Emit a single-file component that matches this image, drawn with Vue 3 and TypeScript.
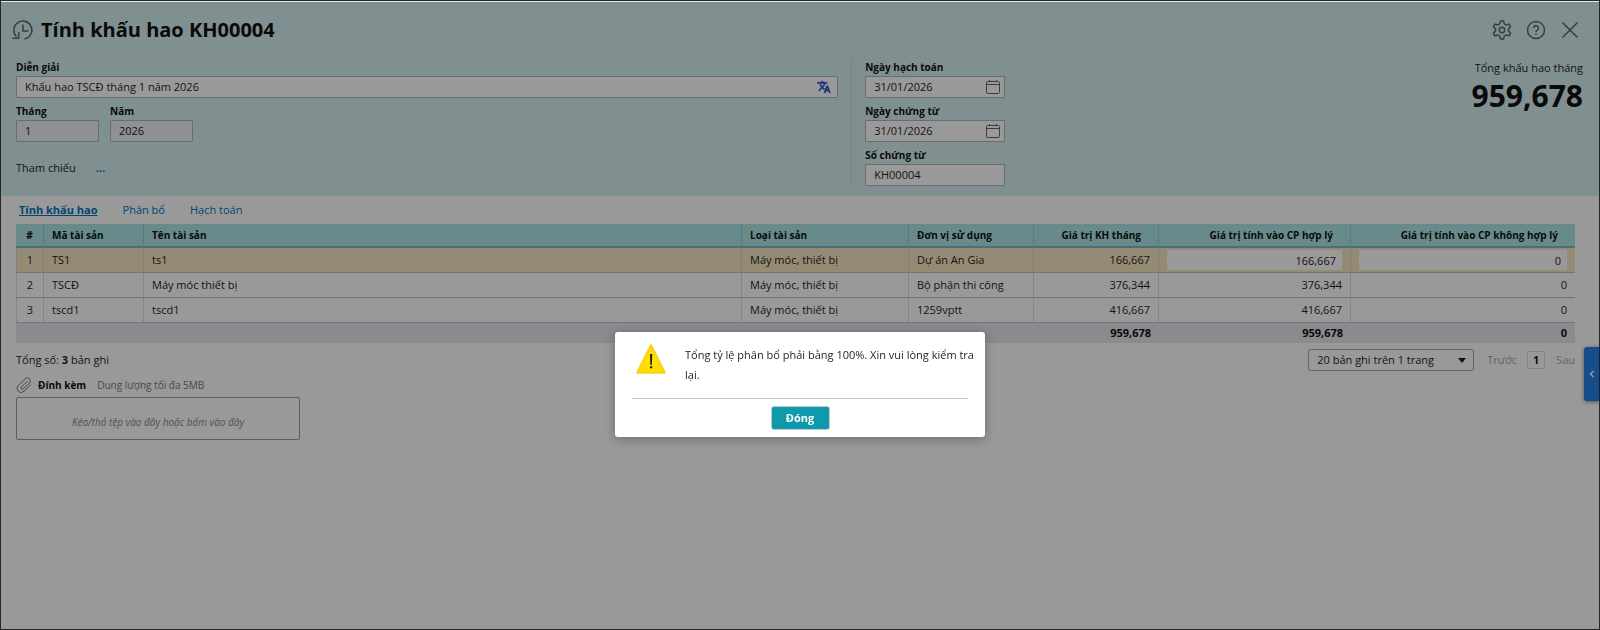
<script setup lang="ts">
import { ref } from 'vue'

interface Asset {
  code: string
  name: string
  type: string
  unit: string
  monthly: string
  deductible: string
  nonDeductible: string
}

const description = ref('Khấu hao TSCĐ tháng 1 năm 2026')
const month = ref('1')
const year = ref('2026')
const postingDate = ref('31/01/2026')
const voucherDate = ref('31/01/2026')
const voucherNo = ref('KH00004')
const pageSize = ref('20 bản ghi trên 1 trang')
const dialogOpen = ref(true)
const activeTab = ref('Tính khấu hao')
const tabs = ['Tính khấu hao', 'Phân bổ', 'Hạch toán']

const assets = ref<Asset[]>([
  { code: 'TS1', name: 'ts1', type: 'Máy móc, thiết bị', unit: 'Dự án An Gia', monthly: '166,667', deductible: '166,667', nonDeductible: '0' },
  { code: 'TSCĐ', name: 'Máy móc thiết bị', type: 'Máy móc, thiết bị', unit: 'Bộ phận thi công', monthly: '376,344', deductible: '376,344', nonDeductible: '0' },
  { code: 'tscd1', name: 'tscd1', type: 'Máy móc, thiết bị', unit: '1259vptt', monthly: '416,667', deductible: '416,667', nonDeductible: '0' },
])
const editing = ref(0)
</script>

<template>
  <div class="page">
    <section class="voucher">
      <header class="titlebar">
        <button class="icon-btn" type="button" aria-label="Lịch sử">
          <svg width="22" height="22" viewBox="0 0 22 22" fill="none" stroke="currentColor" stroke-width="1.5">
            <path d="M4.500 17.500A9 9 0 1 1 12.500 20" />
            <path d="M.5 19.200h6.200v-6.200" />
            <path d="M11 5.500V12h5.500" />
          </svg>
        </button>
        <h1>Tính khấu hao KH00004</h1>
        <div class="actions">
          <button class="icon-btn" type="button" aria-label="Thiết lập">
            <svg width="20" height="20" viewBox="0 0 20 20" fill="none" stroke="currentColor" stroke-width="1.500" stroke-linejoin="round">
              <path d="M8.500 1h3l.8 2.900q1 .4 1.900 1.100l2.900-.8 1.500 2.600-2.100 2.100v2.200l2.100 2.100-1.500 2.600-2.900-.8q-.9.700-1.900 1.100L11.500 19h-3l-.8-2.900q-1-.4-1.900-1.100l-2.900.8-1.500-2.600 2.100-2.100V8.900L1.400 6.800l1.500-2.600 2.900.8q.9-.7 1.900-1.100z" />
              <circle cx="10" cy="10" r="2.700" />
            </svg>
          </button>
          <button class="icon-btn" type="button" aria-label="Trợ giúp">
            <svg width="20" height="20" viewBox="0 0 20 20" fill="none" stroke="currentColor" stroke-width="1.500">
              <circle cx="10" cy="10" r="8.500" />
              <path d="M7.600 8a2.400 2.400 0 1 1 3.800 2c-.9.600-1.400 1-1.400 2" />
              <path d="M10 13.300v1.500" />
            </svg>
          </button>
          <button class="icon-btn" type="button" aria-label="Đóng trang">
            <svg width="20" height="20" viewBox="0 0 20 20" fill="none" stroke="currentColor" stroke-width="1.500">
              <path d="M2.500 2.500l15 15M17.500 2.500l-15 15" />
            </svg>
          </button>
        </div>
      </header>

      <div class="form">
        <div class="general">
          <div class="field">
            <label for="description">Diễn giải</label>
            <div class="box">
              <input id="description" v-model="description" type="text">
              <button class="box-btn translate" type="button" aria-label="Dịch">
                <svg width="14" height="14" viewBox="0 0 24 24" fill="currentColor" stroke="currentColor">
                  <path d="M12.870 15.070l-2.540-2.510.03-.03A17.520 17.520 0 0 0 14.070 6H17V4h-7V2H8v2H1v2h11.170C11.500 7.920 10.440 9.750 9 11.350 8.070 10.320 7.300 9.190 6.690 8h-2c.73 1.630 1.730 3.170 2.980 4.560l-5.090 5.020L4 19l5-5 3.110 3.110.76-2.040zM18.500 10h-2L12 22h2l1.120-3h4.750L21 22h2l-4.500-12zm-2.620 7l1.620-4.330L19.120 17h-3.240z" />
                </svg>
              </button>
            </div>
          </div>
          <div class="period">
            <div class="field">
              <label for="month">Tháng</label>
              <div class="box readonly"><input id="month" v-model="month" type="text" readonly></div>
            </div>
            <div class="field">
              <label for="year">Năm</label>
              <div class="box readonly"><input id="year" v-model="year" type="text" readonly></div>
            </div>
          </div>
          <div class="reference">
            <span>Tham chiếu</span>
            <a href="#">...</a>
          </div>
        </div>

        <div class="dates">
          <div class="field">
            <label for="posting">Ngày hạch toán</label>
            <div class="box">
              <input id="posting" v-model="postingDate" type="text">
              <button class="box-btn" type="button" aria-label="Chọn ngày hạch toán">
                <svg width="14" height="14" viewBox="0 0 14 14" fill="none" stroke="currentColor">
                  <rect x=".5" y="1.500" width="13" height="12" rx="1" /><path d="M.5 4.500h13M3.500 0v2M10.500 0v2" />
                </svg>
              </button>
            </div>
          </div>
          <div class="field">
            <label for="voucher-date">Ngày chứng từ</label>
            <div class="box">
              <input id="voucher-date" v-model="voucherDate" type="text">
              <button class="box-btn" type="button" aria-label="Chọn ngày chứng từ">
                <svg width="14" height="14" viewBox="0 0 14 14" fill="none" stroke="currentColor">
                  <rect x=".5" y="1.500" width="13" height="12" rx="1" /><path d="M.5 4.500h13M3.500 0v2M10.500 0v2" />
                </svg>
              </button>
            </div>
          </div>
          <div class="field">
            <label for="voucher-no">Số chứng từ</label>
            <div class="box"><input id="voucher-no" v-model="voucherNo" type="text"></div>
          </div>
        </div>

        <div class="total">
          <span>Tổng khấu hao tháng</span>
          <strong>959,678</strong>
        </div>
      </div>
    </section>

    <main class="detail">
      <nav class="tabs">
        <button
          v-for="tab in tabs"
          :key="tab"
          type="button"
          :class="{ active: tab === activeTab }"
          @click="activeTab = tab"
        >{{ tab }}</button>
      </nav>

      <table>
        <colgroup>
          <col class="c-index"><col class="c-code"><col><col class="c-type">
          <col class="c-unit"><col class="c-monthly"><col class="c-ok"><col class="c-not">
        </colgroup>
        <thead>
          <tr>
            <th class="center">#</th>
            <th>Mã tài sản</th>
            <th>Tên tài sản</th>
            <th>Loại tài sản</th>
            <th>Đơn vị sử dụng</th>
            <th class="num">Giá trị KH tháng</th>
            <th class="num">Giá trị tính vào CP hợp lý</th>
            <th class="num">Giá trị tính vào CP không hợp lý</th>
          </tr>
        </thead>
        <tbody>
          <tr v-for="(asset, i) in assets" :key="asset.code" :class="{ selected: i === editing }" @click="editing = i">
            <td class="center">{{ i + 1 }}</td>
            <td>{{ asset.code }}</td>
            <td>{{ asset.name }}</td>
            <td>{{ asset.type }}</td>
            <td>{{ asset.unit }}</td>
            <td class="num">{{ asset.monthly }}</td>
            <td class="num">
              <input v-if="i === editing" v-model="asset.deductible" type="text" aria-label="Giá trị tính vào CP hợp lý">
              <template v-else>{{ asset.deductible }}</template>
            </td>
            <td class="num">
              <input v-if="i === editing" v-model="asset.nonDeductible" type="text" aria-label="Giá trị tính vào CP không hợp lý">
              <template v-else>{{ asset.nonDeductible }}</template>
            </td>
          </tr>
        </tbody>
        <tfoot>
          <tr>
            <td colspan="5"></td>
            <td class="num">959,678</td>
            <td class="num">959,678</td>
            <td class="num">0</td>
          </tr>
        </tfoot>
      </table>

      <div class="pager">
        <p>Tổng số: <b>3</b> bản ghi</p>
        <div class="pages">
          <div class="select">
            <select v-model="pageSize" aria-label="Số bản ghi trên trang">
              <option>20 bản ghi trên 1 trang</option>
              <option>50 bản ghi trên 1 trang</option>
            </select>
            <svg width="8" height="5" viewBox="0 0 8 5"><path d="M0 0h8L4 5z" fill="currentColor" /></svg>
          </div>
          <button type="button" disabled>Trước</button>
          <button type="button" class="current">1</button>
          <button type="button" disabled>Sau</button>
        </div>
      </div>

      <div class="attach">
        <svg width="16" height="16" viewBox="0 0 16 16" fill="none" stroke="currentColor" stroke-linecap="round">
          <path d="M11 4.500L5.500 10a1.300 1.300 0 0 0 1.900 1.900l6-6a2.900 2.900 0 0 0-4.200-4.200L2.300 8.600a4 4 0 0 0 5.700 5.700L14.500 8" />
        </svg>
        <b>Đính kèm</b>
        <span>Dung lượng tối đa 5MB</span>
      </div>
      <button class="dropzone" type="button">Kéo/thả tệp vào đây hoặc bấm vào đây</button>
    </main>

    <button class="drawer" type="button" aria-label="Mở bảng bên">
      <svg width="6" height="8" viewBox="0 0 6 8" fill="none" stroke="currentColor" stroke-width="1.500"><path d="M4.500 1l-3 3 3 3" /></svg>
    </button>

    <div v-if="dialogOpen" class="overlay">
      <div class="dialog" role="alertdialog" aria-modal="true" aria-describedby="dialog-text">
        <div class="message">
          <svg width="30" height="30" viewBox="0 0 30 30">
            <path d="M15 1.500L28.500 28.500h-27z" fill="#ffe100" stroke="#fdd216" stroke-width="2.500" stroke-linejoin="round" />
            <path d="M13.900 10h2.400l-.5 11h-1.400zM14 22.300h2.200v2H14z" fill="#222" />
          </svg>
          <p id="dialog-text">Tổng tỷ lệ phân bổ phải bằng 100%. Xin vui lòng kiểm tra lại.</p>
        </div>
        <div class="buttons">
          <button type="button" @click="dialogOpen = false">Đóng</button>
        </div>
      </div>
    </div>
  </div>
</template>

<style>
body {
  background: #fff;
}
</style>

<style scoped>
* {
  box-sizing: border-box;
}

.page {
  display: flex;
  flex-direction: column;
  min-height: 100vh;
  border: 1px solid #27262b;
  background: #fff;
  color: #1f1f1f;
  font: 11px/16px "Open Sans", "Noto Sans", sans-serif;
}

button,
input,
select {
  padding: 0;
  border: 0;
  background: none;
  color: inherit;
  font: inherit;
}

p,
h1 {
  margin: 0;
}

.voucher {
  padding: 12px 16px 10px 15px;
  background: #d5eeef;
}

.titlebar {
  display: flex;
  align-items: center;
  gap: 7px;
  height: 34px;
  margin: 0 3px 11px -4px;
}

h1 {
  color: #111;
  font-size: 20px;
  line-height: 28px;
}

.icon-btn {
  display: flex;
  color: #666;
}

.actions {
  display: flex;
  gap: 14px;
  margin-left: auto;
}

.form {
  display: flex;
  align-items: flex-start;
}

.general {
  display: flex;
  flex: 0 0 53.3%;
  flex-direction: column;
  gap: 4px;
  padding-right: 13px;
}

.dates {
  display: flex;
  flex-direction: column;
  gap: 4px;
  width: 154px;
  padding-left: 13px;
  border-left: 1px solid #c4dadc;
}

.field {
  display: flex;
  flex-direction: column;
}

.field label {
  color: #111;
  font-size: 10px;
  font-weight: 700;
  line-height: 18px;
}

.box {
  display: flex;
  align-items: center;
  height: 22px;
  padding: 0 4px 0 8px;
  border: 1px solid #afb5bd;
  border-radius: 1px;
  background: #fff;
}

.box input {
  flex: 1;
  min-width: 0;
}

.readonly {
  background: #eff0f2;
}

.box-btn {
  display: flex;
  color: #666;
}

.translate {
  margin-right: 2px;
  color: #2350c8;
}

.period {
  display: flex;
  gap: 11px;
}

.period .field {
  width: 83px;
}

.reference {
  display: flex;
  gap: 20px;
  padding-top: 14px;
}

.reference a {
  color: #0075c0;
  font-weight: 700;
  text-decoration: none;
}

.total {
  display: flex;
  flex-direction: column;
  align-items: flex-end;
  gap: 1px;
  margin-left: auto;
  padding-top: 2px;
}

.total strong {
  color: #111;
  font-size: 30px;
  line-height: 38px;
}

.detail {
  padding: 2px 24px 16px 15px;
}

.tabs {
  display: flex;
  gap: 25px;
  padding: 0 0 2px 3px;
}

.tabs button {
  color: #0075c0;
  line-height: 24px;
}

.tabs .active {
  font-weight: 700;
  text-decoration: underline;
}

table {
  width: 100%;
  border-collapse: separate;
  border-spacing: 0;
  table-layout: fixed;
}

.c-index { width: 28px; }
.c-code { width: 100px; }
.c-type { width: 167px; }
.c-unit { width: 125px; }
.c-monthly { width: 125px; }
.c-ok { width: 192px; }
.c-not { width: 224px; }

th,
td {
  height: 25px;
  padding: 0 8px;
  text-align: left;
}

th {
  height: 24px;
  border-right: 1px solid #9ccbd6;
  border-bottom: 2px solid #76bfc4;
  background: #ade6e8;
  color: #111;
  font-size: 10px;
}

tbody td {
  border-right: 1px dotted #a2c8d6;
  border-bottom: 1px solid #c0c2c8;
}

tbody td:first-child {
  border-left: 1px dotted #a2c8d6;
}

th:last-child,
tbody td:last-child {
  border-right: 0;
}

.selected td {
  background: #f9e8c3;
}

.center,
tbody .center {
  padding: 0;
  text-align: center;
}

.num {
  text-align: right;
}

th.num {
  padding-right: 17px;
}

td input {
  display: block;
  width: 100%;
  height: 20px;
  padding: 0 6px;
  background: #fff;
  text-align: right;
}

tfoot td {
  height: 20px;
  background: #e6e8ef;
  color: #111;
  font-weight: 700;
}

.pager {
  display: flex;
  align-items: center;
  justify-content: space-between;
  padding-top: 6px;
}

.pages {
  display: flex;
  align-items: center;
}

.select {
  display: flex;
  align-items: center;
  width: 166px;
  height: 22px;
  margin-right: 13px;
  padding-right: 7px;
  border: 1px solid #a8aaaf;
  border-radius: 2px;
}

.select select {
  flex: 1;
  min-width: 0;
  padding-left: 8px;
  appearance: none;
}

.pages button:disabled {
  color: #a9a9a9;
}

.pages .current {
  width: 18px;
  height: 18px;
  margin: 0 11px 0 10px;
  border: 1px solid #dcdcdc;
  color: #111;
  font-weight: 700;
}

.attach {
  display: flex;
  align-items: center;
  gap: 6px;
  height: 16px;
  margin: 6px 0 4px;
  font-size: 10px;
}

.attach svg {
  color: #777;
}

.attach b {
  color: #111;
}

.attach span {
  margin-left: 5px;
  color: #777;
}

.dropzone {
  width: 284px;
  height: 43px;
  padding-top: 7px;
  border: 1px solid #89a09f;
  border-radius: 2px;
  color: #888;
  font-size: 10px;
  font-style: italic;
}

.drawer {
  position: fixed;
  top: 347px;
  right: 1px;
  display: flex;
  align-items: center;
  justify-content: center;
  width: 15px;
  height: 54px;
  border-radius: 3px 0 0 3px;
  background: #2680eb;
  box-shadow: 0 1px 4px rgba(0, 0, 0, 0.5);
  color: #fff;
}

.overlay {
  position: fixed;
  inset: 2px 1px 1px;
  display: flex;
  justify-content: center;
  align-items: flex-start;
  padding-top: 330px;
  background: rgba(0, 0, 0, 0.4);
}

.dialog {
  width: 370px;
  padding: 12px 8px 8px;
  border-radius: 3px;
  background: #fff;
  box-shadow: 0 2px 12px rgba(0, 0, 0, 0.3);
}

.message {
  display: flex;
  gap: 19px;
  padding: 0 0 13px 13px;
}

.message p {
  flex: 1;
  padding-top: 1px;
  line-height: 20px;
}

.buttons {
  display: flex;
  justify-content: center;
  margin: 0 9px;
  padding-top: 8px;
  border-top: 1px solid #c4c6cd;
}

.buttons button {
  width: 57px;
  height: 22px;
  border-radius: 2px;
  background: #0e9aab;
  box-shadow: 0 0 0 1px #c5c8cf;
  color: #fff;
  font-weight: 700;
}
</style>
